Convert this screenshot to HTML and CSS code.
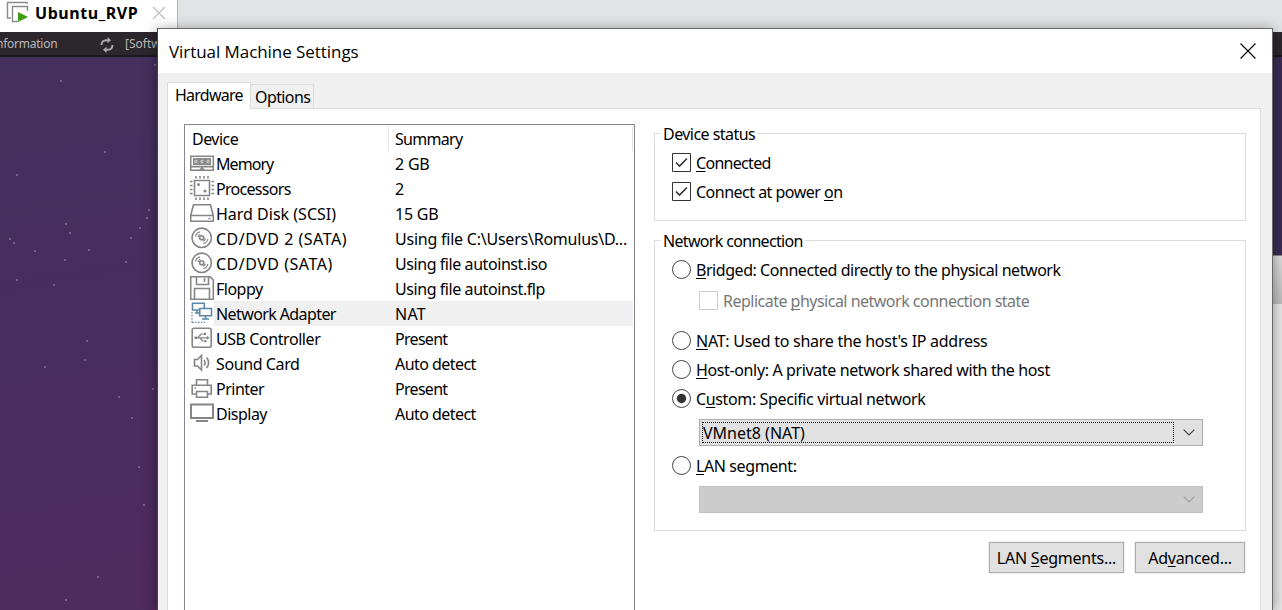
FILE: index.html
```
<!DOCTYPE html>
<html lang="en">
<head>
<meta charset="utf-8">
<title>Virtual Machine Settings</title>
<link rel="stylesheet" href="styles.css">
</head>
<body>
<div class="host">
  <div class="tabstrip">
    <div class="vm-tab">
      <svg class="vm-icon" width="24" height="26" viewBox="0 0 24 26"><path d="M5 18H1.500V2.500H21V4" fill="none" stroke="#8a8a8a" stroke-width="1.400"/><path d="M12 21.500H6.500V6.500H21.500V11" fill="none" stroke="#8a8a8a" stroke-width="1.400"/><path d="M12 12L22 17L12 22Z" fill="#3f9c14"/></svg>
      <span class="vm-name">Ubuntu_RVP</span>
      <svg width="14" height="14" viewBox="0 0 14 14"><path d="M1 1L13 13M13 1L1 13" stroke="#c6c6c6" stroke-width="1.500"/></svg>
    </div>
  </div>
  <div class="guest-bar">
    <span class="guest-info">nformation</span>
    <svg width="14" height="16" viewBox="0 0 14 16" fill="none" stroke="#aaa" stroke-width="2"><path d="M1.500 8C1.500 4 4 3 8 3.200M12.500 8C12.500 12 10 13 6 12.800"/><path d="M7.500 0L11 3.200L7.500 6.300ZM6.500 9.700L3 12.800L6.500 16Z" fill="#aaa" stroke="none"/></svg>
    <span class="guest-soft">[Softw</span>
  </div>
  <div class="wallpaper">
    <svg class="stars" width="158" height="553" viewBox="0 57 158 553"><path d="M60 81h2M154 65h2M104 152h2M16 175h2M148 210h2M146 218h2M139 228h2M65 224h2M69 233h2M130 238h2M9 239h2M13 243h2M34 251h2M88 250h2M64 260h2M125 262h2M16 280h2M53 285h2M86 341h2M84 360h2M44 367h2M152 389h2M118 397h2M131 418h2M138 467h2M143 505h2M97 577h2M65 600h2"/></svg>
    <div class="guest-window"><div class="guest-window-bar"></div></div>
  </div>
</div>

<div class="dialog">
  <div class="titlebar">
    <span class="title">Virtual Machine Settings</span>
    <svg width="16" height="16" viewBox="0 0 16 16"><path d="M.5 .5L15.500 15.500M15.500 .5L.5 15.500" stroke="#000" stroke-width="1.100"/></svg>
  </div>
  <div class="tabs"><div class="tab active"><span class="t75">Hardware</span></div><div class="tab"><span class="t60">Options</span></div></div>
  <div class="page">
    <div class="devices">
      <div class="row header"><span class="name t50">Device</span><span class="summary t70">Summary</span></div>
      <div class="row"><svg class="icon" viewBox="0 0 25 25"><path d="M.7 5.200H23.300V19.300H.7ZM.7 15.600H23.300M9 19.500L12 17L15 19.500"/><path d="M3 7H21V14H3Z" fill="#8a8a8a" stroke="none"/><path d="M5 9.300H7V11.500H5ZM11 9.300H13V11.500H11ZM17 9.300H19V11.500H17Z" stroke="#d0d0d0" stroke-width="1"/></svg><span class="name t90">Memory</span><span class="summary t20">2 GB</span></div>
      <div class="row"><svg class="icon" viewBox="0 0 25 25"><path d="M4.500 4.500H19.500V19.500H4.500Z"/><path d="M6 0V2.500M10 0V2.500M14 0V2.500M18 0V2.500M6 21.500V24M10 21.500V24M14 21.500V24M18 21.500V24M0 5.500H2.500M0 9.500H2.500M0 13.500H2.500M0 17.500H2.500M21.500 5.500H24M21.500 9.500H24M21.500 13.500H24M21.500 17.500H24"/><circle class="fill" cx="8.500" cy="8.500" r="1.500"/><circle class="fill" cx="15" cy="15" r="1.500"/></svg><span class="name t70">Processors</span><span class="summary">2</span></div>
      <div class="row"><svg class="icon" viewBox="0 0 25 25"><path d="M3.500 3.700H20.500L23.300 14.500V20.300H.7V14.500ZM.7 14.500H23.300M18.500 17.500H20.500"/></svg><span class="name">Hard Disk (SCSI)</span><span class="summary t20">15 GB</span></div>
      <div class="row"><svg class="icon" viewBox="0 0 25 25"><g><circle cx="11.700" cy="11.800" r="9.700"/><circle cx="11.700" cy="11.800" r="2"/><path d="M5.500 10.500C6 8 7.500 6.500 10 5.800M8 11C8.300 9.700 9 8.800 10.300 8.300M17.900 13C17.400 15.500 15.900 17 13.400 17.700M15.400 12.500C15.100 13.800 14.400 14.700 13.100 15.200" stroke-width="1.200"/></g></svg><span class="name w50">CD/DVD 2 (SATA)</span><span class="summary t23">Using file C:\Users\Romulus\D...</span></div>
      <div class="row"><svg class="icon" viewBox="0 0 25 25"><g><circle cx="11.700" cy="11.800" r="9.700"/><circle cx="11.700" cy="11.800" r="2"/><path d="M5.500 10.500C6 8 7.500 6.500 10 5.800M8 11C8.300 9.700 9 8.800 10.300 8.300M17.900 13C17.400 15.500 15.900 17 13.400 17.700M15.400 12.500C15.100 13.800 14.400 14.700 13.100 15.200" stroke-width="1.200"/></g></svg><span class="name w50">CD/DVD (SATA)</span><span class="summary t43">Using file autoinst.iso</span></div>
      <div class="row"><svg class="icon" viewBox="0 0 25 25"><path d="M.7 .7H20L23.300 4V23.300H.7ZM6.500 .7V8.500H18.500V.7M14.500 2V6M4.500 23V12.500H19.500V23"/></svg><span class="name t50">Floppy</span><span class="summary t43">Using file autoinst.flp</span></div>
      <div class="row selected"><svg class="icon net" viewBox="0 0 25 25"><path d="M2.500 2.200H14.300V9H2.500ZM7 9V12M5 12H9"/><path d="M9.700 7.500H21.500V14.800H9.700Z" fill="#fff"/><path d="M15.500 15V18M12 18H19"/><path d="M2 11V21.500M2 21.300H15" stroke-width="1.200" stroke-dasharray="1.500 1.500"/></svg><span class="name t60">Network Adapter</span><span class="summary w30">NAT</span></div>
      <div class="row"><svg class="icon" viewBox="0 0 25 25"><rect x="2.200" y="2.200" width="19" height="19" rx="2"/><path d="M5 11.800H18M8 11.500L11 8H14M10 12L12.500 15H15" stroke-width="1.200"/><path class="fill" d="M4.500 10.500H7V13H4.500ZM14 6.800H16V9H14ZM14.500 14H16.500V16.200H14.500ZM17 9.800L19.500 11.800L17 13.800Z"/></svg><span class="name t43">USB Controller</span><span class="summary t70">Present</span></div>
      <div class="row"><svg class="icon" viewBox="0 0 25 25"><path d="M4.500 8.500H7.500L11.500 4.500V19L7.500 15H4.500Z"/><path d="M14 9C15.300 10.500 15.300 13 14 14.500M16.500 6.500C19.300 9.500 19.300 14 16.500 17"/></svg><span class="name t40">Sound Card</span><span class="summary t55">Auto detect</span></div>
      <div class="row"><svg class="icon" viewBox="0 0 25 25"><path d="M6.500 9V3.700H17.500V9M6.500 18H2.200V9.200H21.200V18H17.500M6.500 15.500H17.500V21.300H6.500ZM4.500 12H6"/></svg><span class="name t50">Printer</span><span class="summary t70">Present</span></div>
      <div class="row"><svg class="icon" viewBox="0 0 25 25"><path d="M1 3.500H23V17H1ZM6 20H18" stroke-width="2"/></svg><span class="name t50">Display</span><span class="summary t55">Auto detect</span></div>
    </div>
    <div class="settings">
      <fieldset class="status">
        <legend class="t55">Device status</legend>
        <label class="option"><svg class="box" viewBox="0 0 19 19"><path class="frame" d="M.5 .5H18.500V18.500H.5Z"/><path class="tick" d="M4 9.500L7.500 13L15 5.500"/></svg><span class="t70"><u>C</u>onnected</span></label>
        <label class="option"><svg class="box" viewBox="0 0 19 19"><path class="frame" d="M.5 .5H18.500V18.500H.5Z"/><path class="tick" d="M4 9.500L7.500 13L15 5.500"/></svg><span class="t50">Connect at power <u>o</u>n</span></label>
      </fieldset>
      <fieldset class="network">
        <legend class="t67">Network connection</legend>
        <label class="option"><svg class="box" viewBox="0 0 19 19"><circle class="ring" cx="9.500" cy="9.500" r="9"/></svg><span class="t45"><u>B</u>ridged: Connected directly to the physical network</span></label>
        <label class="option sub"><svg class="box" viewBox="0 0 19 19"><path d="M.5 .5H18.500V18.500H.5Z" fill="#fff" stroke="#ccc"/></svg><span class="t50">Replicate <u>p</u>hysical network connection state</span></label>
        <label class="option"><svg class="box" viewBox="0 0 19 19"><circle class="ring" cx="9.500" cy="9.500" r="9"/></svg><span class="t27"><u>N</u>AT: Used to share the host's IP address</span></label>
        <label class="option"><svg class="box" viewBox="0 0 19 19"><circle class="ring" cx="9.500" cy="9.500" r="9"/></svg><span class="t37"><u>H</u>ost-only: A private network shared with the host</span></label>
        <label class="option"><svg class="box" viewBox="0 0 19 19"><circle class="ring" cx="9.500" cy="9.500" r="9"/><circle cx="9.500" cy="9.500" r="4.700" fill="#333"/></svg><span class="t37">C<u>u</u>stom: Specific virtual network</span></label>
        <div class="select"><span class="value">VMnet8 (NAT)</span><svg width="12" height="7" viewBox="0 0 12 7"><path d="M.7 .7L6 6L11.300 .7" fill="none" stroke="#444" stroke-width="1.200"/></svg></div>
        <label class="option"><svg class="box" viewBox="0 0 19 19"><circle class="ring" cx="9.500" cy="9.500" r="9"/></svg><span class="t40"><u>L</u>AN segment:</span></label>
        <div class="select disabled"><svg width="12" height="7" viewBox="0 0 12 7"><path d="M.7 .7L6 6L11.300 .7" fill="none" stroke="#a0a0a0" stroke-width="1.200"/></svg></div>
      </fieldset>
      <div class="actions"><div class="button lan"><span class="t23">LAN <u>S</u>egments...</span></div><div class="button adv"><span class="t27">Ad<u>v</u>anced...</span></div></div>
    </div>
  </div>
</div>
</body>
</html>
```
FILE: styles.css
```
* { box-sizing: border-box; }
body { margin: 0; width: 1282px; height: 610px; overflow: hidden; position: relative; font: 16px/22px "Noto Sans", "Open Sans", sans-serif; color: #000; }
svg { display: block; flex: none; }
u { text-decoration-thickness: 1px; text-underline-offset: 2px; text-decoration-skip-ink: none; }
span, legend { white-space: nowrap; }

/* Tracking, in hundredths of a pixel: t tightens, w widens */
.t20 { letter-spacing: -.2px; }
.t23 { letter-spacing: -.23px; }
.t27 { letter-spacing: -.27px; }
.t37 { letter-spacing: -.37px; }
.t40 { letter-spacing: -.4px; }
.t43 { letter-spacing: -.43px; }
.t45 { letter-spacing: -.45px; }
.t50 { letter-spacing: -.51px; }
.t55 { letter-spacing: -.55px; }
.t60 { letter-spacing: -.6px; }
.t67 { letter-spacing: -.67px; }
.t70 { letter-spacing: -.7px; }
.t75 { letter-spacing: -.75px; }
.t90 { letter-spacing: -.95px; }
.w30 { letter-spacing: .3px; }
.w50 { letter-spacing: .5px; }

.host { height: 610px; display: flex; flex-direction: column; }
.tabstrip { height: 32px; background: #e2e3e5; display: flex; }
.vm-tab { width: 178px; background: #fff; border-right: 1px solid #b4b4b4; display: flex; align-items: center; padding: 0 0 7px 6px; }
.vm-name { font-weight: 700; letter-spacing: .55px; margin-left: 5px; width: 117px; }
.guest-bar { height: 25px; background: linear-gradient(#2b272c 92%, #1c191e 92%); display: flex; align-items: center; color: #b9b7b9; font: 12px/16px "Noto Sans", sans-serif; }
.guest-bar span { margin-top: -1px; }
.guest-info { width: 104px; margin-left: -4px; letter-spacing: -.25px; }
.guest-soft { margin-left: 11px; }
.wallpaper { flex: 1; position: relative; display: flex; justify-content: space-between; background: linear-gradient(170deg, #44305d 0%, #482d5e 35%, #4f2b5e 68%, #50285b 100%); }
.stars { stroke: #755f88; stroke-width: 2; }
.guest-window { width: 24px; margin-top: 198px; background: #e9e9e9; box-shadow: 0 -198px 0 #392c55; }
.guest-window-bar { height: 49px; background: linear-gradient(#dedede, #bdbdbd); border-top: 1px solid #888; }

.dialog { position: absolute; left: 157px; top: 28px; width: 1116px; height: 582px; overflow: hidden; border: 1px solid #696969; border-left-color: #444; border-bottom: 0; background: #f0f0f0; box-shadow: 0 2px 13px rgba(0,0,0,.42); }
.titlebar { height: 44px; background: #fff; display: flex; justify-content: space-between; align-items: center; padding: 0 16px 0 11px; font: 17px/24px "Open Sans", sans-serif; letter-spacing: -.06px; }
.title { padding-top: 1px; }
.tabs { display: flex; align-items: flex-end; height: 36px; padding-left: 9px; position: relative; margin-bottom: -1px; }
.tab { height: 25px; width: 63px; border: 1px solid #dcdcdc; border-left: 0; padding: 1px 0 0 4px; }
.tab.active { height: 27px; width: 84px; border: 1px solid #dcdcdc; border-bottom: 0; background: #fff; padding: 1px 0 0 7px; }
.page { margin: 0 11px 0 9px; height: 502px; background: #fff; border: 1px solid #dcdcdc; border-bottom: 0; display: flex; padding: 15px 14px 0 16px; gap: 19px; }
.devices { width: 451px; border: 1px solid #828790; border-bottom: 0; padding: 1px 1px 0 5px; }
.row { height: 25px; display: flex; align-items: center; }
.row .name { width: 174px; padding-left: 1px; }
.row .summary { flex: 1; padding-left: 6px; }
.header .name { width: 199px; padding-left: 2px; border-right: 1px solid #e5e5e5; height: 25px; line-height: 26px; }
.header .summary { border-right: 1px solid #e5e5e5; height: 25px; line-height: 26px; }
.selected { background: linear-gradient(90deg, #fff 24px, #f0f0f0 24px); }
.icon { width: 25px; height: 25px; fill: none; stroke: #858585; stroke-width: 1.6; }
.icon .fill { fill: #858585; stroke: none; }
.net { stroke: #5c87a8; }

.settings { width: 592px; display: flex; flex-direction: column; margin-top: -1px; }
fieldset { margin: 0; border: 1px solid #dcdcdc; padding: 4px 0 0 17px; min-width: 0; }
fieldset legend { margin-left: -11px; padding: 0 2px; height: 21px; line-height: 23px; }
.status { height: 98px; margin-bottom: 9px; }
.network { height: 301px; }
.option { display: flex; align-items: center; gap: 5px; height: 29px; }
.option > span { padding-top: 1px; }
.box { width: 19px; height: 19px; }
.frame { fill: #fff; stroke: #333; }
.tick { fill: none; stroke: #333; stroke-width: 1.6; }
.ring { fill: #fff; stroke: #444; }
.sub { margin: 2px 0 11px 27px; color: #777; }
.select { margin: 6px 0 5px 27px; width: 504px; height: 27px; border: 1px solid #adadad; background: #e1e1e1; display: flex; align-items: center; justify-content: space-between; padding: 0 7px 0 2px; }
.value { border: 1px dotted #000; width: 472px; height: 21px; line-height: 20px; }
.select.disabled { background: #ccc; border-color: #bfbfbf; justify-content: flex-end; }
.actions { display: flex; justify-content: flex-end; gap: 11px; margin-top: 11px; padding-right: 1px; }
.button { height: 31px; border: 1px solid #adadad; background: #e1e1e1; display: flex; align-items: center; justify-content: center; box-shadow: 0 0 0 1px #f0f0f0; }
.button span { padding-top: 1px; }
.lan { width: 135px; }
.adv { width: 110px; }
```
